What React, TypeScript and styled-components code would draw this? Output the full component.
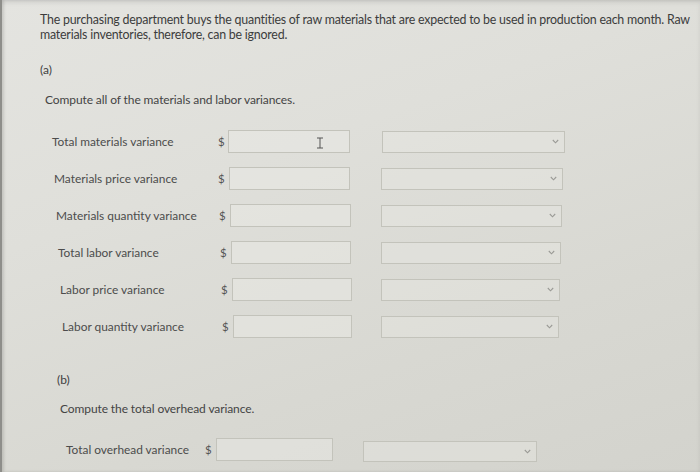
import React from "react";
import styled, { createGlobalStyle } from "styled-components";

const Global = createGlobalStyle`
  html, body { margin: 0; padding: 0; }
  body {
    width: 700px;
    height: 472px;
    overflow: hidden;
    font-family: Lato, "Open Sans", "Liberation Sans", sans-serif;
    background: linear-gradient(160deg, #e4e4e0 0%, #dfdfda 35%, #d8d8d2 70%, #d3d3cd 100%);
  }
`;

const Screen = styled.div`
  position: relative;
  width: 700px;
  height: 472px;
  box-sizing: border-box;
  padding: 12px 0 0 40px;
  box-shadow: inset 2px 0 0 #8e8e8a, inset 4px 0 3px rgba(0,0,0,0.12), inset 0 3px 4px rgba(0,0,0,0.08);
  color: #3b3b3b;
`;

const Para = styled.p`
  margin: 0;
  width: 655px;
  font-size: 12.4px;
  line-height: 15px;
  color: #3c3c3c;
  letter-spacing: -0.22px;
`;

const Part = styled.div<{ $top: number; $left: number }>`
  margin-top: ${(p) => p.$top}px;
  margin-left: ${(p) => p.$left}px;
  font-size: 12px;
  line-height: 15px;
  color: #404040;
`;

const Instr = styled.div<{ $top: number; $left: number }>`
  margin-top: ${(p) => p.$top}px;
  margin-left: ${(p) => p.$left}px;
  font-size: 12px;
  line-height: 15px;
  color: #444;
  letter-spacing: -0.1px;
`;

const Rows = styled.div<{ $top: number }>`
  margin-top: ${(p) => p.$top}px;
  display: flex;
  flex-direction: column;
  gap: 14px;
`;

const Row = styled.div<{ $label: number; $dollar: number; $input: number; $inputW: number; $gap: number; $selW: number }>`
  display: grid;
  grid-template-columns: ${(p) => p.$label}px ${(p) => p.$dollar}px ${(p) => p.$inputW}px ${(p) => p.$selW}px;
  align-items: center;
  height: 23px;
  & > :nth-child(3) { margin-left: ${(p) => p.$input}px; }
  & > :nth-child(4) { margin-left: ${(p) => p.$gap}px; }
`;

const Label = styled.div<{ $indent: number }>`
  padding-left: ${(p) => p.$indent}px;
  font-size: 11.9px;
  color: #4c4c4c;
  white-space: nowrap;
`;

const Dollar = styled.div`
  font-size: 11.5px;
  color: #555;
`;

const InputBox = styled.div<{ $w: number }>`
  position: relative;
  box-sizing: border-box;
  width: ${(p) => p.$w}px;
  height: 23px;
  border: 1px solid #c3c3bb;
  background: rgba(236, 236, 231, 0.45);
`;

const SelectBox = styled.div<{ $w: number }>`
  box-sizing: border-box;
  width: ${(p) => p.$w}px;
  height: 22px;
  border: 1px solid #c3c3bb;
  background: rgba(232, 232, 227, 0.4);
  display: flex;
  align-items: center;
  justify-content: flex-end;
  padding-right: 5px;
`;

const Cursor = styled.svg`
  position: absolute;
  left: 87px;
  top: 6px;
`;

const Chevron = () => (
  <svg width="7" height="5" viewBox="0 0 7 5">
    <path d="M0.8 1 L3.5 3.8 L6.2 1" fill="none" stroke="#9a9a96" strokeWidth="1.1" />
  </svg>
);

type RowDef = {
  label: string;
  indent: number;
  labelW: number;
  inputOffset: number;
  inputW: number;
  gap: number;
  selW: number;
  cursor?: boolean;
};

const rowsA: RowDef[] = [
  { label: "Total materials variance", indent: 12, labelW: 178, inputOffset: 0, inputW: 122, gap: 32, selW: 183, cursor: true },
  { label: "Materials price variance", indent: 14, labelW: 178, inputOffset: 1, inputW: 121, gap: 31, selW: 182 },
  { label: "Materials quantity variance", indent: 16, labelW: 179, inputOffset: 1, inputW: 121, gap: 30, selW: 181 },
  { label: "Total labor variance", indent: 18, labelW: 180, inputOffset: 1, inputW: 120, gap: 30, selW: 180 },
  { label: "Labor price variance", indent: 20, labelW: 181, inputOffset: 1, inputW: 120, gap: 29, selW: 179 },
  { label: "Labor quantity variance", indent: 22, labelW: 182, inputOffset: 1, inputW: 119, gap: 29, selW: 178 },
];

const VarRow = ({ r }: { r: RowDef }) => (
  <Row $label={r.labelW} $dollar={10} $input={r.inputOffset} $inputW={r.inputW + r.inputOffset} $gap={r.gap} $selW={r.selW + r.gap}>
    <Label $indent={r.indent}>{r.label}</Label>
    <Dollar>$</Dollar>
    <InputBox $w={r.inputW}>
      {r.cursor && (
        <Cursor width="8" height="12" viewBox="0 0 8 12">
          <path d="M1 1 H7 M4 1 V11 M1 11 H7" fill="none" stroke="#555" strokeWidth="1" />
        </Cursor>
      )}
    </InputBox>
    <SelectBox $w={r.selW}>
      <Chevron />
    </SelectBox>
  </Row>
);

const OverRow = styled.div`
  margin-top: 22px;
  display: flex;
  align-items: center;
  height: 23px;
`;

const OverLabel = styled(Label)`
  width: 165px;
  box-sizing: border-box;
  flex-shrink: 0;
`;

const OverDollar = styled(Dollar)`
  width: 11px;
  flex-shrink: 0;
`;

const OverSelect = styled(SelectBox)`
  margin-left: 30px;
  margin-top: 3px;
  height: 21px;
  flex-shrink: 0;
`;

const OverInput = styled(InputBox)`
  flex-shrink: 0;
`;

export default function App() {
  return (
    <>
      <Global />
      <Screen>
        <Para>
          The purchasing department buys the quantities of raw materials that are expected to be used in production each month. Raw
          materials inventories, therefore, can be ignored.
        </Para>
        <Part $top={20} $left={0}>(a)</Part>
        <Instr $top={15} $left={5}>Compute all of the materials and labor variances.</Instr>
        <Rows $top={23}>
          {rowsA.map((r) => (
            <VarRow key={r.label} r={r} />
          ))}
        </Rows>
        <Part $top={34} $left={17}>(b)</Part>
        <Instr $top={14} $left={20}>Compute the total overhead variance.</Instr>
        <OverRow>
          <OverLabel $indent={26}>Total overhead variance</OverLabel>
          <OverDollar>$</OverDollar>
          <OverInput $w={117} />
          <OverSelect $w={174}>
            <Chevron />
          </OverSelect>
        </OverRow>
      </Screen>
    </>
  );
}
